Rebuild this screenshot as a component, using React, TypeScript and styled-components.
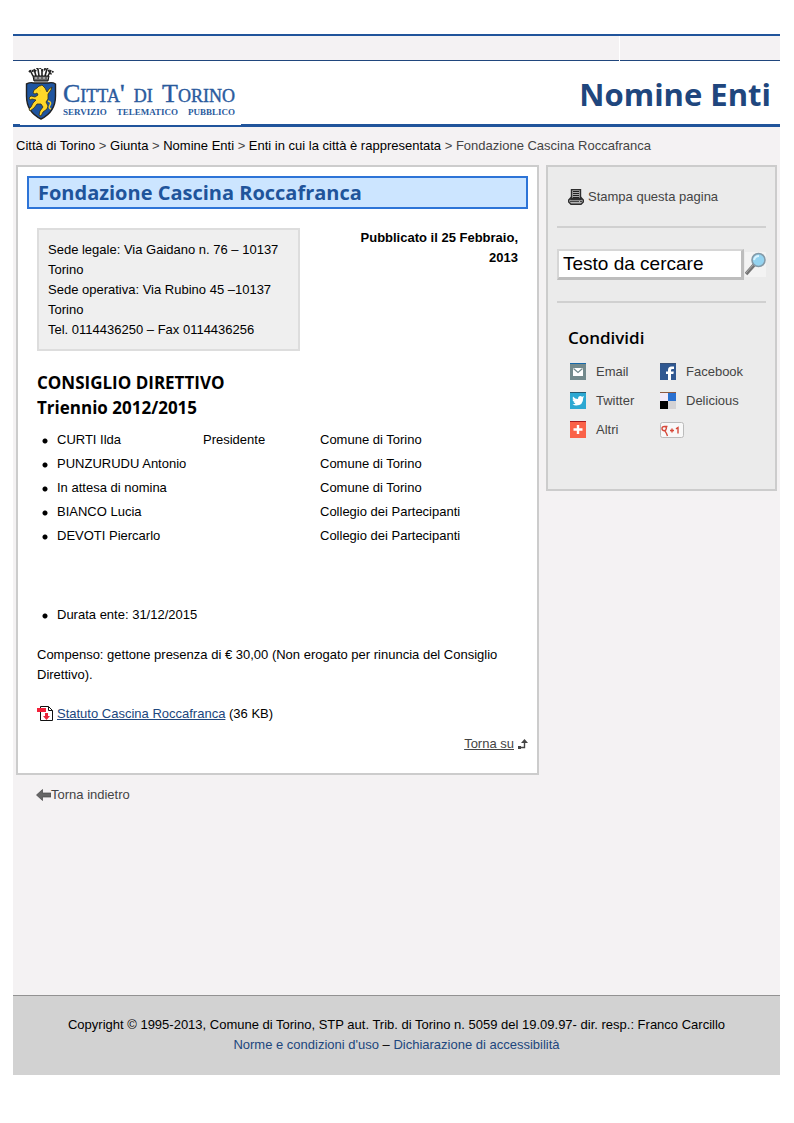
import React from "react";
import styled, { createGlobalStyle } from "styled-components";

const headingFont = `"Open Sans", "Noto Sans", sans-serif`;
const blue = "#20467d";
const brightBlue = "#20549b";

const GlobalStyle = createGlobalStyle`
  * { box-sizing: border-box; }
  body {
    margin: 0;
    background: #fff;
    color: #000;
    font: 13px/20px "Liberation Sans", Arial, sans-serif;
  }
  h1, h2, h3, p, ul { margin: 0; padding: 0; }
  svg { display: block; flex: none; }
`;

const Page = styled.div`
  margin: 34px 14px 48px 13px;
  background: #f4f2f3;
`;

const TopStrip = styled.div`
  display: grid;
  grid-template-columns: 606fr 160fr;
  gap: 1px;
  height: 27px;
  border-top: 2px solid ${brightBlue};
  background: #fff;
`;

const StripCell = styled.div`
  background: #f4f2f3;
  border-bottom: 1px solid ${blue};
`;

const Header = styled.header`
  display: flex;
  justify-content: space-between;
  align-items: flex-start;
  height: 66px;
  padding: 0 9px 0 7px;
  background: #fff;
  border-bottom: 3px solid ${brightBlue};
`;

const Logo = styled.a`
  display: flex;
  gap: 6px;
  width: 221px;
  height: 64px;
  padding: 7px 6px 0 5px;
  background: #fff;
  color: #2a5a9d;
  text-decoration: none;
`;

const LogoText = styled.span`
  display: flex;
  flex-direction: column;
  flex: 1;
  padding-top: 12px;
`;

const LogoName = styled.span`
  display: flex;
  justify-content: space-between;
  font: 26px/28px "Liberation Serif", serif;
  font-variant: small-caps;
  -webkit-text-stroke: 0.4px #2a5a9d;
  white-space: nowrap;
`;

const LogoTagline = styled.span`
  display: flex;
  justify-content: space-between;
  font: bold 9px/9px "Liberation Serif", serif;
  text-transform: uppercase;
`;

const SiteTitle = styled.h1`
  font: bold 31px/66px ${headingFont};
  color: ${blue};
`;

const Crumbs = styled.nav`
  padding: 9px 3px;
  color: #444;
`;

const CrumbLink = styled.a`
  color: #000;
  text-decoration: none;
`;

const Columns = styled.div`
  display: grid;
  grid-template-columns: minmax(0, 523fr) minmax(0, 231fr);
  align-items: start;
  gap: 7px;
  padding: 0 3px;
`;

const Panel = styled.main`
  padding: 9px;
  border: 2px solid #ccc;
  background: #fff;
`;

const PanelTitle = styled.h2`
  padding: 0 9px;
  border: 2px solid #2d74d7;
  background: #cce5ff;
  color: ${brightBlue};
  font: bold 20px/29px ${headingFont};
`;

const Article = styled.article`
  padding: 19px 10px 0;
`;

const Intro = styled.div`
  display: flex;
  justify-content: space-between;
  align-items: flex-start;
`;

const Address = styled.p`
  width: 263px;
  padding: 10px 9px 9px;
  border: 2px solid #ddd;
  background: #efefef;
`;

const Published = styled.p`
  width: 170px;
  font-weight: bold;
  text-align: right;
`;

const BoardTitle = styled.h3`
  padding: 19px 0 8px;
  font: bold 17px/25px ${headingFont};
`;

const List = styled.ul`
  list-style: none;
  line-height: 24px;
`;

const Item = styled.li`
  display: grid;
  grid-template-columns: 146px 117px 1fr;
  padding-left: 20px;
  background: radial-gradient(circle at 8px 13px, #000 0 2px, transparent 3px);
`;

const Term = styled(List)`
  padding: 55px 0 18px;
`;

const WideItem = styled(Item)`
  grid-template-columns: 1fr;
`;

const Download = styled.p`
  display: flex;
  gap: 4px;
  padding: 19px 0 10px;
`;

const DocLink = styled.a`
  color: ${blue};
`;

const ToTop = styled.div`
  display: flex;
  justify-content: flex-end;
  align-items: center;
  gap: 4px;
  padding-bottom: 10px;
`;

const GreyLink = styled.a<{ $plain?: boolean }>`
  display: flex;
  align-items: center;
  color: #444;
  text-decoration: ${(p) => (p.$plain ? "none" : "underline")};
`;

const Sidebar = styled.aside`
  min-height: 326px;
  padding: 0 9px;
  border: 2px solid #ccc;
  background: #ebebeb;
`;

const SideBlock = styled.div`
  display: flex;
  align-items: center;
  padding: 20px 0 19px 11px;
  border-bottom: 2px solid #d0d0d0;
`;

const PrintLink = styled(GreyLink)`
  gap: 4px;
`;

const SearchForm = styled.form`
  display: flex;
  align-items: center;
  gap: 1px;
  padding: 21px 0;
  border-bottom: 2px solid #d0d0d0;
`;

const SearchInput = styled.input`
  flex: 1;
  min-width: 0;
  height: 31px;
  padding: 0 4px;
  border: solid;
  border-width: 2px 3px 3px 2px;
  border-color: #d6d6d6 #bdbdbd #bdbdbd #d6d6d6;
  outline: 0;
  background: #fff;
  font: 19px "Liberation Sans", Arial, sans-serif;
`;

const SearchButton = styled.button`
  padding: 0;
  border: 0;
  background: #f3f3f3;
`;

const ShareTitle = styled.h3`
  padding: 23px 11px 7px;
  font: 600 17px/24px ${headingFont};
`;

const ShareGrid = styled.div`
  display: grid;
  grid-template-columns: 90px 1fr;
  grid-auto-rows: 29px;
  padding-left: 13px;
`;

const ShareLink = styled(GreyLink)`
  gap: 10px;
`;

const BackLink = styled(GreyLink)`
  width: max-content;
  margin: 10px 23px 190px;
`;

const Footer = styled.footer`
  padding: 19px 0 20px;
  border-top: 1px solid #929292;
  background: #d2d2d2;
  text-align: center;
`;

const FooterLink = styled.a`
  color: ${blue};
  text-decoration: none;
`;

const Crest = () => (
  <svg width="32" height="52" viewBox="0 0 32 52" aria-hidden="true">
    <path d="M8 8 5 2M11 8 9 1M14 8 13 1M17 8V1M20 8l2-7M23 8l3-6" stroke="#222" strokeWidth="1.6" />
    <path d="M4 4q2-2 4-1t4-2 4 0 4 0 4 2 4 0" fill="none" stroke="#222" strokeWidth="2" strokeDasharray="2 1" />
    <path d="M8 8h16l-1 5H9Z" fill="#666" stroke="#111" />
    <path d="M10 10h13" stroke="#ddd" strokeDasharray="2 2" />
    <path d="M1.500 16q4-2 7-1h15q4-1 7 1v12q0 16-14.500 23Q1.500 44 1.500 28Z" fill="#1f55a0" stroke="#222" strokeWidth="1.400" />
    <path d="m14 18-2 2-3 2-1 3 2 1 2-1 1 2-3 2-4-1-2 2 1 2 2-1 4 1-3 3-2 4-2 2 1 2 4-3 3-4 4 0 2 3-3 4-1 4 2 1 2-4 4-3 1-3-2-4 2-3 0-5 3-4 1-3-3 2-2 3-2-4-3-3-2 1Z" fill="#ffd829" stroke="#342f16" strokeWidth=".8" />
    <path d="M23 33q4 1 2 4t1 4M14 22l2 1" fill="none" stroke="#f5cf2c" strokeWidth="1.400" />
  </svg>
);

const PrinterIcon = () => (
  <svg width="16" height="16" viewBox="0 0 16 16" aria-hidden="true">
    <path d="M3.500.5h9v9h-9Z" fill="#aaa" stroke="#2e2e2e" strokeWidth="1.400" />
    <path d="M5 2.500h6M5 4.500h6M5 6.500h6M5 8.500h6" stroke="#222" />
    <path d="M3 8.500.7 11v2L3 15.300h10l2.300-2.300v-2L13 8.500v2H3Z" fill="#b5b5b5" stroke="#2e2e2e" strokeWidth="1.400" />
    <path d="M2 12.500h12" stroke="#444" strokeDasharray="9 1" />
  </svg>
);

const SearchIcon = () => (
  <svg width="21" height="25" viewBox="0 0 21 25" aria-hidden="true">
    <path d="m1 22 8-9" stroke="#747474" strokeWidth="3.500" />
    <path d="m1 21 7-8" stroke="#aaa" />
    <circle cx="13.500" cy="8" r="6.500" fill="#94d3f0" stroke="#849aa8" strokeWidth="1.600" />
    <path d="M9 8q1-4 5-4" fill="none" stroke="#d9f3ff" strokeWidth="2" />
  </svg>
);

const PdfIcon = () => (
  <svg width="16" height="18" viewBox="0 0 16 18" aria-hidden="true">
    <path d="M3.500 2.500h8l4 4v10h-12Z" fill="#fff" stroke="#111" />
    <path d="M11.500 2.500v4h4" fill="none" stroke="#111" />
    <path d="M0 4h9v4H0Z" fill="#f3213a" />
    <path d="M8 9h3v3h2l-3.500 4L6 12h2Z" fill="#e9263a" />
  </svg>
);

const TopIcon = () => (
  <svg width="10" height="12" viewBox="0 0 10 12" aria-hidden="true">
    <path d="M0 8h3v3H0Z" fill="#444" />
    <path d="M3 9.500h3.500V3" fill="none" stroke="#444" strokeWidth="1.400" />
    <path d="m6.500 1 3.500 4H3Z" fill="#444" />
  </svg>
);

const BackIcon = () => (
  <svg width="15" height="12" viewBox="0 0 15 12" aria-hidden="true">
    <path d="m.5 6 6-5.500v3.500H15v4H6.500v3.500Z" fill="#666" stroke="#484848" strokeWidth=".7" />
  </svg>
);

const Tile = ({ fill, top, children }: { fill: string; top: string; children: React.ReactNode }) => (
  <svg width="16" height="17" viewBox="0 0 16 17" aria-hidden="true">
    <path d="M0 0h16v17H0Z" fill={fill} />
    <path d="M0 0h16v1H0Z" fill={top} />
    {children}
  </svg>
);

const EmailIcon = () => (
  <Tile fill="#738a8d" top="#1768a8">
    <path d="M3 5h10v8H3Z" fill="#fff" />
    <path d="m3.500 5.500 4.500 4 4.500-4" fill="none" stroke="#738a8d" strokeWidth="1.200" />
  </Tile>
);

const FacebookIcon = () => (
  <Tile fill="#305891" top="#375077">
    <path d="M8 17v-6H6V8.500h2V7q0-3.500 3.500-3.500H14V6h-1.500Q11 6 11 7v1.500h2.800l-.4 2.500H11v6Z" fill="#fff" />
  </Tile>
);

const TwitterIcon = () => (
  <Tile fill="#2ca8d2" top="#265a70">
    <path d="M3 4.500q2 2.500 5 2.500 0-3 2.500-3l1.800.7L14 4l-.8 2q0 7.500-7 7.500-2 0-3.700-1l3-.8-2-1.700h1Q2.500 9 2.500 7.500l1 .3Q2 6.500 3 4.500Z" fill="#fff" />
  </Tile>
);

const DeliciousIcon = () => (
  <Tile fill="#f2e9fa" top="#8d5a43">
    <path d="M8 1h8v8H8Z" fill="#2a70d0" />
    <path d="M0 9h8v8H0Z" fill="#000" />
    <path d="M8 9h8v8H8Z" fill="#d4d2d4" />
  </Tile>
);

const MoreIcon = () => (
  <Tile fill="#fa6248" top="#a61c20">
    <path d="M8 4v9M3.500 8.500h9" stroke="#fff" strokeWidth="2.400" />
  </Tile>
);

const PlusOneIcon = () => (
  <svg width="24" height="16" viewBox="0 0 24 16" role="img" aria-label="Google +1">
    <rect x=".5" y=".5" width="23" height="15" rx="2" fill="#f8f8f8" stroke="#bbb" />
    <path d="M7.500 4.500H4.500Q2 4.500 2 6.500t2 2.200 2.300-2T4.500 4.500M5 9l1.500 2.500 1 2.500" fill="none" stroke="#d6493a" strokeWidth="1.400" />
    <path d="M10 8.500h4M12 6.500v4M16 6.800 18 5.500v6" fill="none" stroke="#d6493a" strokeWidth="1.400" />
  </svg>
);

const crumbs = ["Città di Torino", "Giunta", "Nomine Enti", "Enti in cui la città è rappresentata"];

const board = [
  ["CURTI Ilda", "Presidente", "Comune di Torino"],
  ["PUNZURUDU Antonio", "", "Comune di Torino"],
  ["In attesa di nomina", "", "Comune di Torino"],
  ["BIANCO Lucia", "", "Collegio dei Partecipanti"],
  ["DEVOTI Piercarlo", "", "Collegio dei Partecipanti"],
];

const shares: [string, React.ComponentType][] = [
  ["Email", EmailIcon],
  ["Facebook", FacebookIcon],
  ["Twitter", TwitterIcon],
  ["Delicious", DeliciousIcon],
  ["Altri", MoreIcon],
  ["", PlusOneIcon],
];

export default function App() {
  return (
    <Page>
      <GlobalStyle />
      <TopStrip>
        <StripCell />
        <StripCell />
      </TopStrip>
      <Header>
        <Logo href="#">
          <Crest />
          <LogoText>
            <LogoName>
              <span>Citta'</span>
              <span>di</span>
              <span>Torino</span>
            </LogoName>
            <LogoTagline>
              <span>Servizio</span>
              <span>Telematico</span>
              <span>Pubblico</span>
            </LogoTagline>
          </LogoText>
        </Logo>
        <SiteTitle>Nomine Enti</SiteTitle>
      </Header>
      <Crumbs>
        {crumbs.map((c) => (
          <React.Fragment key={c}>
            <CrumbLink href="#">{c}</CrumbLink>
            {" > "}
          </React.Fragment>
        ))}
        Fondazione Cascina Roccafranca
      </Crumbs>
      <Columns>
        <Panel>
          <PanelTitle>Fondazione Cascina Roccafranca</PanelTitle>
          <Article>
            <Intro>
              <Address>
                Sede legale: Via Gaidano n. 76 – 10137 Torino
                <br />
                Sede operativa: Via Rubino 45 –10137 Torino
                <br />
                Tel. 0114436250 – Fax 0114436256
              </Address>
              <Published>Pubblicato il 25 Febbraio, 2013</Published>
            </Intro>
            <BoardTitle>
              CONSIGLIO DIRETTIVO
              <br />
              Triennio 2012/2015
            </BoardTitle>
            <List>
              {board.map(([name, role, body]) => (
                <Item key={name}>
                  <span>{name}</span>
                  <span>{role}</span>
                  <span>{body}</span>
                </Item>
              ))}
            </List>
            <Term>
              <WideItem>Durata ente: 31/12/2015</WideItem>
            </Term>
            <p>Compenso: gettone presenza di € 30,00 (Non erogato per rinuncia del Consiglio Direttivo).</p>
            <Download>
              <PdfIcon />
              <span>
                <DocLink href="#">Statuto Cascina Roccafranca</DocLink> (36 KB)
              </span>
            </Download>
          </Article>
          <ToTop>
            <GreyLink href="#">Torna su</GreyLink>
            <TopIcon />
          </ToTop>
        </Panel>
        <Sidebar>
          <SideBlock>
            <PrintLink href="#" $plain>
              <PrinterIcon />
              Stampa questa pagina
            </PrintLink>
          </SideBlock>
          <SearchForm onSubmit={(e) => e.preventDefault()}>
            <SearchInput type="text" aria-label="Testo da cercare" defaultValue="Testo da cercare" />
            <SearchButton type="submit" aria-label="Cerca">
              <SearchIcon />
            </SearchButton>
          </SearchForm>
          <ShareTitle>Condividi</ShareTitle>
          <ShareGrid>
            {shares.map(([label, Icon], i) => (
              <ShareLink key={i} href="#" $plain>
                <Icon />
                {label}
              </ShareLink>
            ))}
          </ShareGrid>
        </Sidebar>
      </Columns>
      <BackLink href="#" $plain>
        <BackIcon />
        Torna indietro
      </BackLink>
      <Footer>
        <p>Copyright © 1995-2013, Comune di Torino, STP aut. Trib. di Torino n. 5059 del 19.09.97- dir. resp.: Franco Carcillo</p>
        <p>
          <FooterLink href="#">Norme e condizioni d'uso</FooterLink> – <FooterLink href="#">Dichiarazione di accessibilità</FooterLink>
        </p>
      </Footer>
    </Page>
  );
}
